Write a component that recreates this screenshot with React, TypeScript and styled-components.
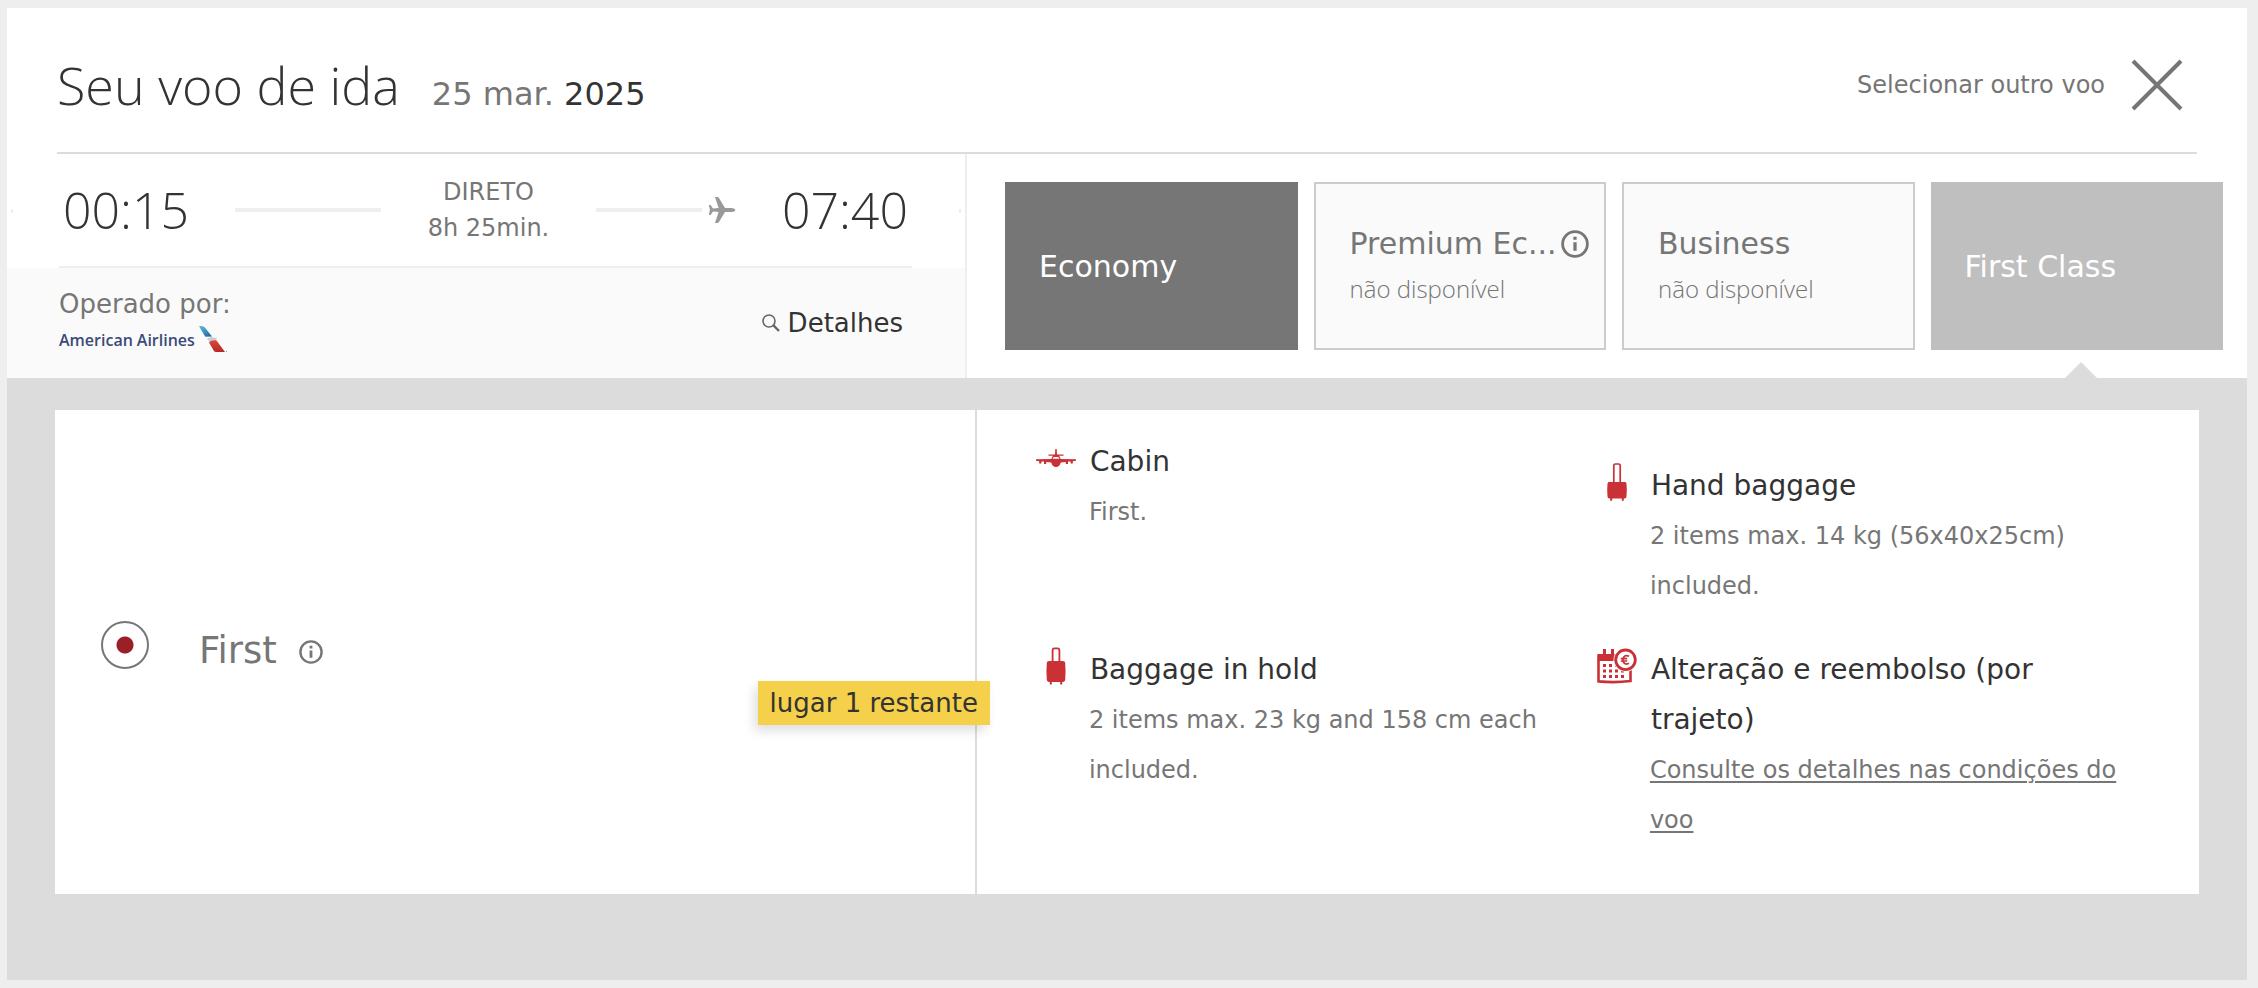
import React from 'react';
import styled, { createGlobalStyle } from 'styled-components';

const Global = createGlobalStyle`
  *, *::before, *::after { box-sizing: border-box; }
  body { margin: 0; background: #eee; color: #333; font-family: "DejaVu Sans", Verdana, sans-serif; font-size: 24px; }
  h1, h2, h3, p { margin: 0; font-weight: 400; }
  button { font: inherit; color: inherit; border: 0; background: none; padding: 0; cursor: pointer; }
`;

const LIGHT = '"Open Sans", "Noto Sans", sans-serif';

const Page = styled.main`
  padding: 8px 11px 8px 7px;
  min-height: 100vh;
  display: flex;
  flex-direction: column;
`;
const Panel = styled.article`
  flex: 1;
  display: flex;
  flex-direction: column;
  background: #fff;
`;
const Header = styled.header`
  display: flex;
  align-items: center;
  justify-content: space-between;
  height: 146px;
  margin: 0 50px;
  padding-top: 10px;
  border-bottom: 2px solid #dcdcdc;
`;
const Heading = styled.div`
  display: flex;
  align-items: baseline;
  gap: 32px;
`;
const Title = styled.h1`
  font: 300 52px/74px ${LIGHT};
`;
const DateText = styled.p`
  font-size: 32px;
  color: #767676;
`;
const Year = styled.span`
  color: #333;
`;
const CloseButton = styled.button`
  display: flex;
  align-items: center;
  gap: 26px;
  padding-right: 14px;
  color: #767676;
`;
const Summary = styled.section`
  display: flex;
  height: 224px;
`;
const Flight = styled.div`
  width: calc(300% / 7);
  border-right: 2px solid #eee;
  display: flex;
  flex-direction: column;
`;
const RouteRow = styled.div`
  display: flex;
  align-items: center;
  justify-content: space-between;
  height: 114px;
  padding: 0 4px;
`;
const Route = styled.div`
  flex: 1;
  align-self: stretch;
  display: flex;
  align-items: center;
  justify-content: space-between;
  margin: 0 47px 0 46px;
  padding: 0 4px;
  border-bottom: 2px solid #eee;
`;
const Time = styled.time`
  font: 300 50px/64px ${LIGHT};
`;
const Dash = styled.span<{ $w: number }>`
  width: ${(p) => p.$w}px;
  height: 4px;
  background: #eee;
`;
const Arrow = styled.div`
  display: flex;
  align-items: center;
  gap: 6px;
`;
const Duration = styled.p`
  text-align: center;
  line-height: 36px;
  color: #767676;
`;
const Operator = styled.div`
  flex: 1;
  display: flex;
  align-items: center;
  justify-content: space-between;
  padding: 0 62px 0 52px;
  background: #fafafa;
`;
const Carrier = styled.div`
  color: #767676;
  font-size: 26px;
  line-height: 34px;
`;
const Logo = styled.div`
  display: flex;
  align-items: center;
  height: 38px;
  gap: 4px;
  color: #3a4a78;
  font: 600 16px/34px "Open Sans", sans-serif;
`;
const DetailsButton = styled.button`
  display: flex;
  align-items: center;
  gap: 8px;
  font-size: 26px;
  color: #333;
`;
const Cabins = styled.div`
  flex: 1;
  min-width: 0;
  display: grid;
  grid-template-columns: repeat(4, 1fr);
  gap: 16px;
  padding: 28px 24px 28px 38px;
`;
const Cabin = styled.button<{ $kind: 'dark' | 'empty' | 'current' }>`
  position: relative;
  display: flex;
  flex-direction: column;
  justify-content: center;
  min-width: 0;
  padding: ${(p) => (p.$kind === 'empty' ? '0 14px 2px 34px' : '0 14px 0 34px')};
  text-align: left;
  font-size: 30px;
  color: ${(p) => (p.$kind === 'empty' ? '#767676' : '#fff')};
  background: ${(p) => ({ dark: '#767676', empty: '#fafafa', current: '#bfbfbf' })[p.$kind]};
  border: ${(p) => (p.$kind === 'empty' ? '2px solid #ccc' : '0')};
`;
const CabinName = styled.span`
  display: flex;
  align-items: center;
  gap: 4px;
  line-height: 48px;
  white-space: nowrap;
`;
const Unavailable = styled.span`
  font: 300 24px/42px ${LIGHT};
`;
const Pointer = styled.span`
  position: absolute;
  bottom: -28px;
  left: calc(50% - 12px);
  border: 16px solid transparent;
  border-top-width: 0;
  border-bottom-color: #dcdcdc;
`;
const Fares = styled.section`
  flex: 1;
  padding: 32px 48px 86px;
  background: #dcdcdc;
`;
const Fare = styled.div`
  display: flex;
  min-height: 484px;
  background: #fff;
`;
const Choice = styled.div`
  position: relative;
  width: 43%;
  border-right: 2px solid #dcdcdc;
  display: flex;
  align-items: center;
  padding-left: 46px;
  color: #767676;
`;
const Radio = styled.input`
  appearance: none;
  width: 48px;
  height: 48px;
  margin: 0 50px 14px 0;
  border: 2px solid #767676;
  border-radius: 50%;
  background: radial-gradient(circle, #9b1f27 0 8px, transparent 9px);
`;
const FareName = styled.label`
  margin: 0 22px 4px 0;
  font-size: 37px;
`;
const SeatsLeft = styled.span`
  position: absolute;
  right: -15px;
  top: 271px;
  padding: 0 12px;
  line-height: 44px;
  font-size: 26px;
  color: #333;
  background: #f5d04a;
  box-shadow: -4px 6px 10px rgba(0, 0, 0, 0.12);
`;
const Benefits = styled.div`
  flex: 1;
  display: grid;
  grid-template-columns: 561px 1fr;
  grid-template-rows: 208px 1fr;
  align-items: start;
  padding: 27px 70px 0 54px;
`;
const Benefit = styled.section<{ $low?: boolean }>`
  display: grid;
  grid-template-columns: 58px 1fr;
  margin-top: ${(p) => (p.$low ? 24 : 0)}px;
`;
const IconBox = styled.span`
  display: flex;
  justify-content: center;
  align-items: center;
  width: 50px;
  height: 42px;
  color: #c93136;
`;
const BenefitTitle = styled.h3`
  padding-left: 1px;
  font-size: 28px;
  line-height: 50px;
`;
const BenefitText = styled.p`
  font-size: 24px;
  line-height: 50px;
  color: #767676;
`;
const TextLink = styled.a`
  color: inherit;
  text-decoration: underline;
  text-decoration-thickness: 2px;
  text-underline-offset: 3px;
`;
const InfoSvg = styled.svg`
  flex-shrink: 0;
`;

const Info = ({ size }: { size: number }) => (
  <InfoSvg width={size} height={size} viewBox="0 0 24 24" fill="none" stroke="currentColor" strokeWidth="2.4" aria-hidden="true">
    <circle cx="12" cy="12" r="10.6" />
    <path d="M12 10.4v7.4M12 5.8v2.6" strokeWidth="2.8" />
  </InfoSvg>
);

const TailMark = () => (
  <svg width="30" height="28" viewBox="0 0 30 28" aria-hidden="true">
    <defs>
      <linearGradient id="tailBlue" x1="0" y1="0" x2="1" y2="1">
        <stop offset="0" stopColor="#5cc0e4" />
        <stop offset="1" stopColor="#1d5f96" />
      </linearGradient>
      <linearGradient id="tailRed" x1="0" y1="0" x2="0" y2="1">
        <stop offset="0" stopColor="#d84a36" />
        <stop offset="1" stopColor="#b52a26" />
      </linearGradient>
    </defs>
    <path d="M0 0h2.500C5 .4 6 1.500 7 3l6 7.500-6.500.2C5 9 4 7 0 0z" fill="url(#tailBlue)" />
    <path d="M8 12.500l4-1.500 6 1.200-1 2-6.500 1.800z" fill="#c9ced3" />
    <path d="M10 16.500c1.500-2 5-2.500 7.500-2L26 26h-9c-1.500 0-2-1-2.600-2z" fill="url(#tailRed)" />
    <circle cx="27.500" cy="25.500" r=".7" fill="#aaa" />
  </svg>
);

const SearchIcon = () => (
  <svg width="18" height="18" viewBox="0 0 18 18" fill="none" stroke="#666" aria-hidden="true">
    <circle cx="7" cy="7" r="6" strokeWidth="1.600" />
    <path d="m11.200 11.200 5.800 5.800" strokeWidth="2.400" />
  </svg>
);

const FlightIcon = () => (
  <svg width="28" height="28" viewBox="0 0 28 28" fill="#999" aria-hidden="true">
    <path d="M7 1h2.500c.6 0 1 .3 1.300.8L17 12h6.500c2.200 0 3.800 1 3.800 2s-1.600 2-3.800 2H17l-6.200 10.200c-.3.500-.7.800-1.300.8H7l3.600-11-5.600-.5L2.600 19H.8l1.100-5L.8 9h1.800L5 12.500l5.600-.5z" />
  </svg>
);

const CabinIcon = () => (
  <svg width="40" height="18" viewBox="0 0 40 18" fill="currentColor" aria-hidden="true">
    <path d="M19.300 0h1.400l.3 5.500h6.500v1.300h-4.600c1 .9 1.500 2 1.700 3.200l15.400.2v1.600l-3.200.4v2.400h-2.200v-2.200l-2.600.2v2.400h-2.200v-2.100l-5 .5c-.5 2.600-2.400 4.600-4.800 4.600s-4.300-2-4.800-4.600l-5-.5V15H8v-2.400l-2.600-.2v2.200H3.200v-2.400L0 11.800v-1.600l15.400-.2c.2-1.200.7-2.300 1.700-3.200h-4.600V5.500H19z" />
    <path d="M16.600 10c.3-1 .8-1.700 1.400-2.100h4c.6.400 1.100 1.100 1.400 2.100-2.200-.5-4.600-.5-6.800 0z" fill="#fff" />
  </svg>
);

const SuitcaseIcon = () => (
  <svg width="20" height="38" viewBox="0 0 20 38" aria-hidden="true">
    <path d="M6.600 15V3.500c0-1.300.8-2.200 2-2.200h2.800c1.200 0 2 .9 2 2.200V15" fill="none" stroke="currentColor" strokeWidth="1.800" />
    <path d="M3 14h14c1.300 0 2 .8 2.200 2 .5 5.500.5 11 0 16.500-.2 1.500-.9 2.500-2.200 2.500h-.8v2.500h-2V35H5.800v2.500h-2V35H3C1.700 35 1 34 .8 32.500.3 27 .3 21.500.8 16c.2-1.200.9-2 2.200-2z" fill="currentColor" />
  </svg>
);

const HandBagIcon = () => (
  <svg width="20" height="38" viewBox="0 0 20 38" aria-hidden="true">
    <path d="M6.800 19V2.800c0-1 .6-1.800 1.600-1.800h3.200c1 0 1.600.8 1.600 1.800V19" fill="none" stroke="currentColor" strokeWidth="1.700" />
    <path d="M2.400 19h15.200c1.200 0 1.800.6 1.900 1.700.4 4.200.4 8.400 0 12.600-.1 1.400-.8 2.200-1.900 2.200h-.8v2.300h-2v-2.300H5.200v2.300h-2v-2.300h-.8c-1.100 0-1.800-.8-1.900-2.200-.4-4.200-.4-8.400 0-12.600.1-1.100.7-1.700 1.900-1.700z" fill="currentColor" />
  </svg>
);

const RefundIcon = () => (
  <svg width="40" height="36" viewBox="0 0 40 36" aria-hidden="true">
    <path d="M1.500 7.500h32V33c-9 1.200-22 1.400-32 .4z" fill="#fff" stroke="currentColor" strokeWidth="2.600" />
    <path d="M1 6h26v7H1z" fill="currentColor" />
    <path d="M7.500 1v7M15.500 1v7" stroke="currentColor" strokeWidth="3" />
    <path d="M6 16h3v3H6zm6 0h3v3h-3zm6 0h3v3h-3zM6 21.500h3v3H6zm6 0h3v3h-3zm6 0h3v3h-3zm6 0h3v3h-3zM6 27h3v3H6zm6 0h3v3h-3zm6 0h3v3h-3zm6 0h3v3h-3z" fill="currentColor" />
    <circle cx="28.500" cy="11.800" r="12" fill="#fff" />
    <circle cx="28.500" cy="11.800" r="9.800" fill="#fff" stroke="currentColor" strokeWidth="2.800" />
    <path d="M32 8.300c-3.200-1.700-6-.2-6 3.500s2.800 5.200 6 3.500M23.800 10.700h6.400M23.800 13h6.400" fill="none" stroke="currentColor" strokeWidth="1.700" />
  </svg>
);

export default function App() {
  return (
    <Page>
      <Global />
      <Panel>
        <Header>
          <Heading>
            <Title>Seu voo de ida</Title>
            <DateText>25 mar. <Year>2025</Year></DateText>
          </Heading>
          <CloseButton type="button">
            Selecionar outro voo
            <svg width="52" height="52" viewBox="0 0 52 52" stroke="currentColor" strokeWidth="4" aria-hidden="true"><path d="M2 2 50 50M50 2 2 50" /></svg>
          </CloseButton>
        </Header>
        <Summary>
          <Flight>
            <RouteRow>
              <Dash $w={2} />
              <Route>
                <Time>00:15</Time>
                <Dash $w={146} />
                <Duration>DIRETO<br />8h 25min.</Duration>
                <Arrow>
                  <Dash $w={106} />
                  <FlightIcon />
                </Arrow>
                <Time>07:40</Time>
              </Route>
              <Dash $w={2} />
            </RouteRow>
            <Operator>
              <Carrier>
                Operado por:
                <Logo><span>American</span><span>Airlines</span><TailMark /></Logo>
              </Carrier>
              <DetailsButton type="button"><SearchIcon />Detalhes</DetailsButton>
            </Operator>
          </Flight>
          <Cabins>
            <Cabin type="button" $kind="dark">Economy</Cabin>
            <Cabin type="button" $kind="empty"><CabinName>Premium Ec...<Info size={28} /></CabinName><Unavailable>não disponível</Unavailable></Cabin>
            <Cabin type="button" $kind="empty"><CabinName>Business</CabinName><Unavailable>não disponível</Unavailable></Cabin>
            <Cabin type="button" $kind="current">First Class<Pointer /></Cabin>
          </Cabins>
        </Summary>
        <Fares>
          <Fare>
            <Choice>
              <Radio type="radio" id="first" name="fare" defaultChecked />
              <FareName htmlFor="first">First</FareName>
              <Info size={24} />
              <SeatsLeft>lugar 1 restante</SeatsLeft>
            </Choice>
            <Benefits>
              <Benefit>
                <IconBox><CabinIcon /></IconBox>
                <div><BenefitTitle>Cabin</BenefitTitle><BenefitText>First.</BenefitText></div>
              </Benefit>
              <Benefit $low>
                <IconBox><HandBagIcon /></IconBox>
                <div><BenefitTitle>Hand baggage</BenefitTitle><BenefitText>2 items max. 14 kg (56x40x25cm) included.</BenefitText></div>
              </Benefit>
              <Benefit>
                <IconBox><SuitcaseIcon /></IconBox>
                <div><BenefitTitle>Baggage in hold</BenefitTitle><BenefitText>2 items max. 23 kg and 158 cm each included.</BenefitText></div>
              </Benefit>
              <Benefit>
                <IconBox><RefundIcon /></IconBox>
                <div><BenefitTitle>Alteração e reembolso (por trajeto)</BenefitTitle><BenefitText><TextLink href="#condicoes">Consulte os detalhes nas condições do voo</TextLink></BenefitText></div>
              </Benefit>
            </Benefits>
          </Fare>
        </Fares>
      </Panel>
    </Page>
  );
}
